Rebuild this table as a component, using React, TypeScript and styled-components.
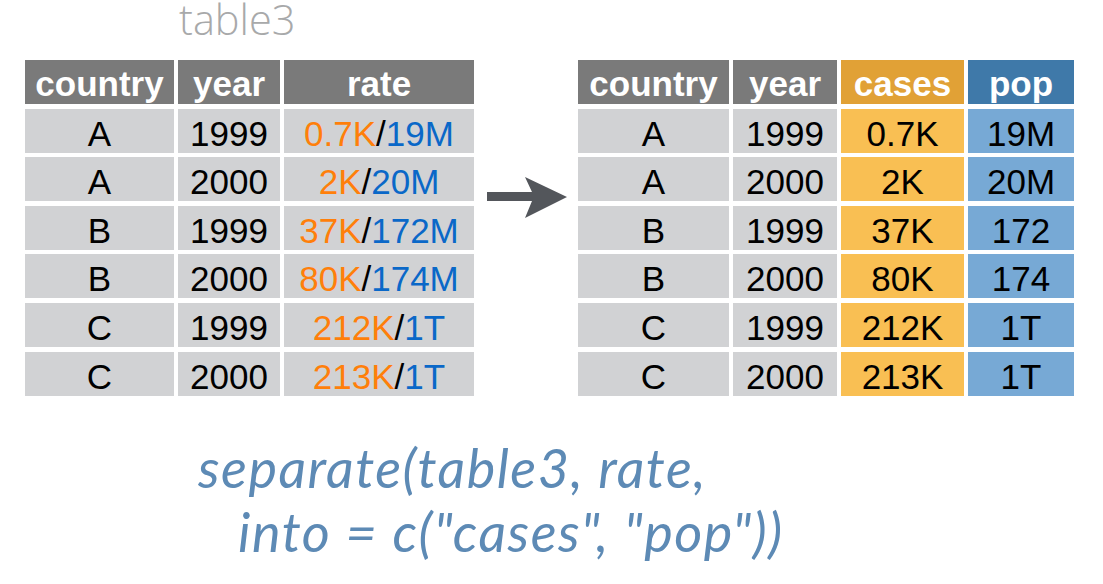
import React from "react";
import styled, { createGlobalStyle } from "styled-components";

const GlobalStyle = createGlobalStyle`
  html, body {
    margin: 0;
    padding: 0;
    background: #ffffff;
  }
`;

const Page = styled.div`
  width: 1103px;
  height: 584px;
  overflow: hidden;
  background: #ffffff;
  font-family: "Liberation Sans", Arial, sans-serif;
`;

const Title = styled.div`
  height: 60px;
  padding-left: 179px;
  box-sizing: border-box;
  font-family: "Open Sans", sans-serif;
  font-weight: 300;
  font-size: 41.5px;
  line-height: 38px;
  color: #a8a9aa;
`;

const TablesRow = styled.div`
  display: flex;
  align-items: flex-start;
  padding-left: 25px;
`;

const Grid = styled.div<{ $cols: string; $gap: number }>`
  display: grid;
  grid-template-columns: ${(p) => p.$cols};
  column-gap: ${(p) => p.$gap}px;
  row-gap: 4.5px;
  grid-auto-rows: 44.1px;
`;

const HeadCell = styled.div<{ $bg: string }>`
  background: ${(p) => p.$bg};
  color: #ffffff;
  font-weight: 700;
  font-size: 35px;
  line-height: 44px;
  text-align: center;
  padding-top: 2px;
  box-sizing: border-box;
  white-space: nowrap;
`;

const Cell = styled.div<{ $bg: string }>`
  background: ${(p) => p.$bg};
  color: #000000;
  font-size: 35px;
  line-height: 44px;
  text-align: center;
  padding-top: 3px;
  box-sizing: border-box;
  white-space: nowrap;
`;

const Cases = styled.span`
  color: #ff7f0a;
`;

const Pop = styled.span`
  color: #0a68c8;
`;

const ArrowSlot = styled.div`
  width: 104px;
  margin-top: 117px;
  display: flex;
`;

const Code = styled.div`
  margin-top: 40px;
  padding-left: 198px;
  font-family: Lato, "Open Sans", sans-serif;
  font-style: italic;
  font-weight: 400;
  font-size: 54px;
  line-height: 64px;
  letter-spacing: 1.5px;
  color: #5d8ab5;
  white-space: pre;
`;

const CodeLine = styled.div<{ $indent?: number }>`
  padding-left: ${(p) => p.$indent ?? 0}px;
`;

const GRAY_HEAD = "#7a7a7a";
const GRAY_CELL = "#d1d2d4";
const ORANGE_HEAD = "#e1a136";
const ORANGE_CELL = "#f9bf53";
const BLUE_HEAD = "#3f79a9";
const BLUE_CELL = "#77a9d5";

const rows = [
  { country: "A", year: "1999", cases: "0.7K", pop: "19M", rawPop: "19M" },
  { country: "A", year: "2000", cases: "2K", pop: "20M", rawPop: "20M" },
  { country: "B", year: "1999", cases: "37K", pop: "172", rawPop: "172M" },
  { country: "B", year: "2000", cases: "80K", pop: "174", rawPop: "174M" },
  { country: "C", year: "1999", cases: "212K", pop: "1T", rawPop: "1T" },
  { country: "C", year: "2000", cases: "213K", pop: "1T", rawPop: "1T" },
];

const Arrow: React.FC = () => (
  <svg width="104" height="42" viewBox="0 0 104 42">
    <path
      d="M13 15 H58 L51 0 L93 20 L51 41 L58 24 H13 Z"
      fill="#53565b"
    />
  </svg>
);

export default function App() {
  return (
    <Page>
      <GlobalStyle />
      <Title>table3</Title>
      <TablesRow>
        <Grid $cols="149px 102px 190px" $gap={4}>
          <HeadCell $bg={GRAY_HEAD}>country</HeadCell>
          <HeadCell $bg={GRAY_HEAD}>year</HeadCell>
          <HeadCell $bg={GRAY_HEAD}>rate</HeadCell>
          {rows.map((r, i) => (
            <React.Fragment key={i}>
              <Cell $bg={GRAY_CELL}>{r.country}</Cell>
              <Cell $bg={GRAY_CELL}>{r.year}</Cell>
              <Cell $bg={GRAY_CELL}>
                <Cases>{r.cases}</Cases>/<Pop>{r.rawPop}</Pop>
              </Cell>
            </React.Fragment>
          ))}
        </Grid>
        <ArrowSlot>
          <Arrow />
        </ArrowSlot>
        <Grid $cols="151px 104px 123px 106px" $gap={4}>
          <HeadCell $bg={GRAY_HEAD}>country</HeadCell>
          <HeadCell $bg={GRAY_HEAD}>year</HeadCell>
          <HeadCell $bg={ORANGE_HEAD}>cases</HeadCell>
          <HeadCell $bg={BLUE_HEAD}>pop</HeadCell>
          {rows.map((r, i) => (
            <React.Fragment key={i}>
              <Cell $bg={GRAY_CELL}>{r.country}</Cell>
              <Cell $bg={GRAY_CELL}>{r.year}</Cell>
              <Cell $bg={ORANGE_CELL}>{r.cases}</Cell>
              <Cell $bg={BLUE_CELL}>{r.pop}</Cell>
            </React.Fragment>
          ))}
        </Grid>
      </TablesRow>
      <Code>
        <CodeLine>separate(table3, rate,</CodeLine>
        <CodeLine $indent={40}>into = c("cases", "pop"))</CodeLine>
      </Code>
    </Page>
  );
}
